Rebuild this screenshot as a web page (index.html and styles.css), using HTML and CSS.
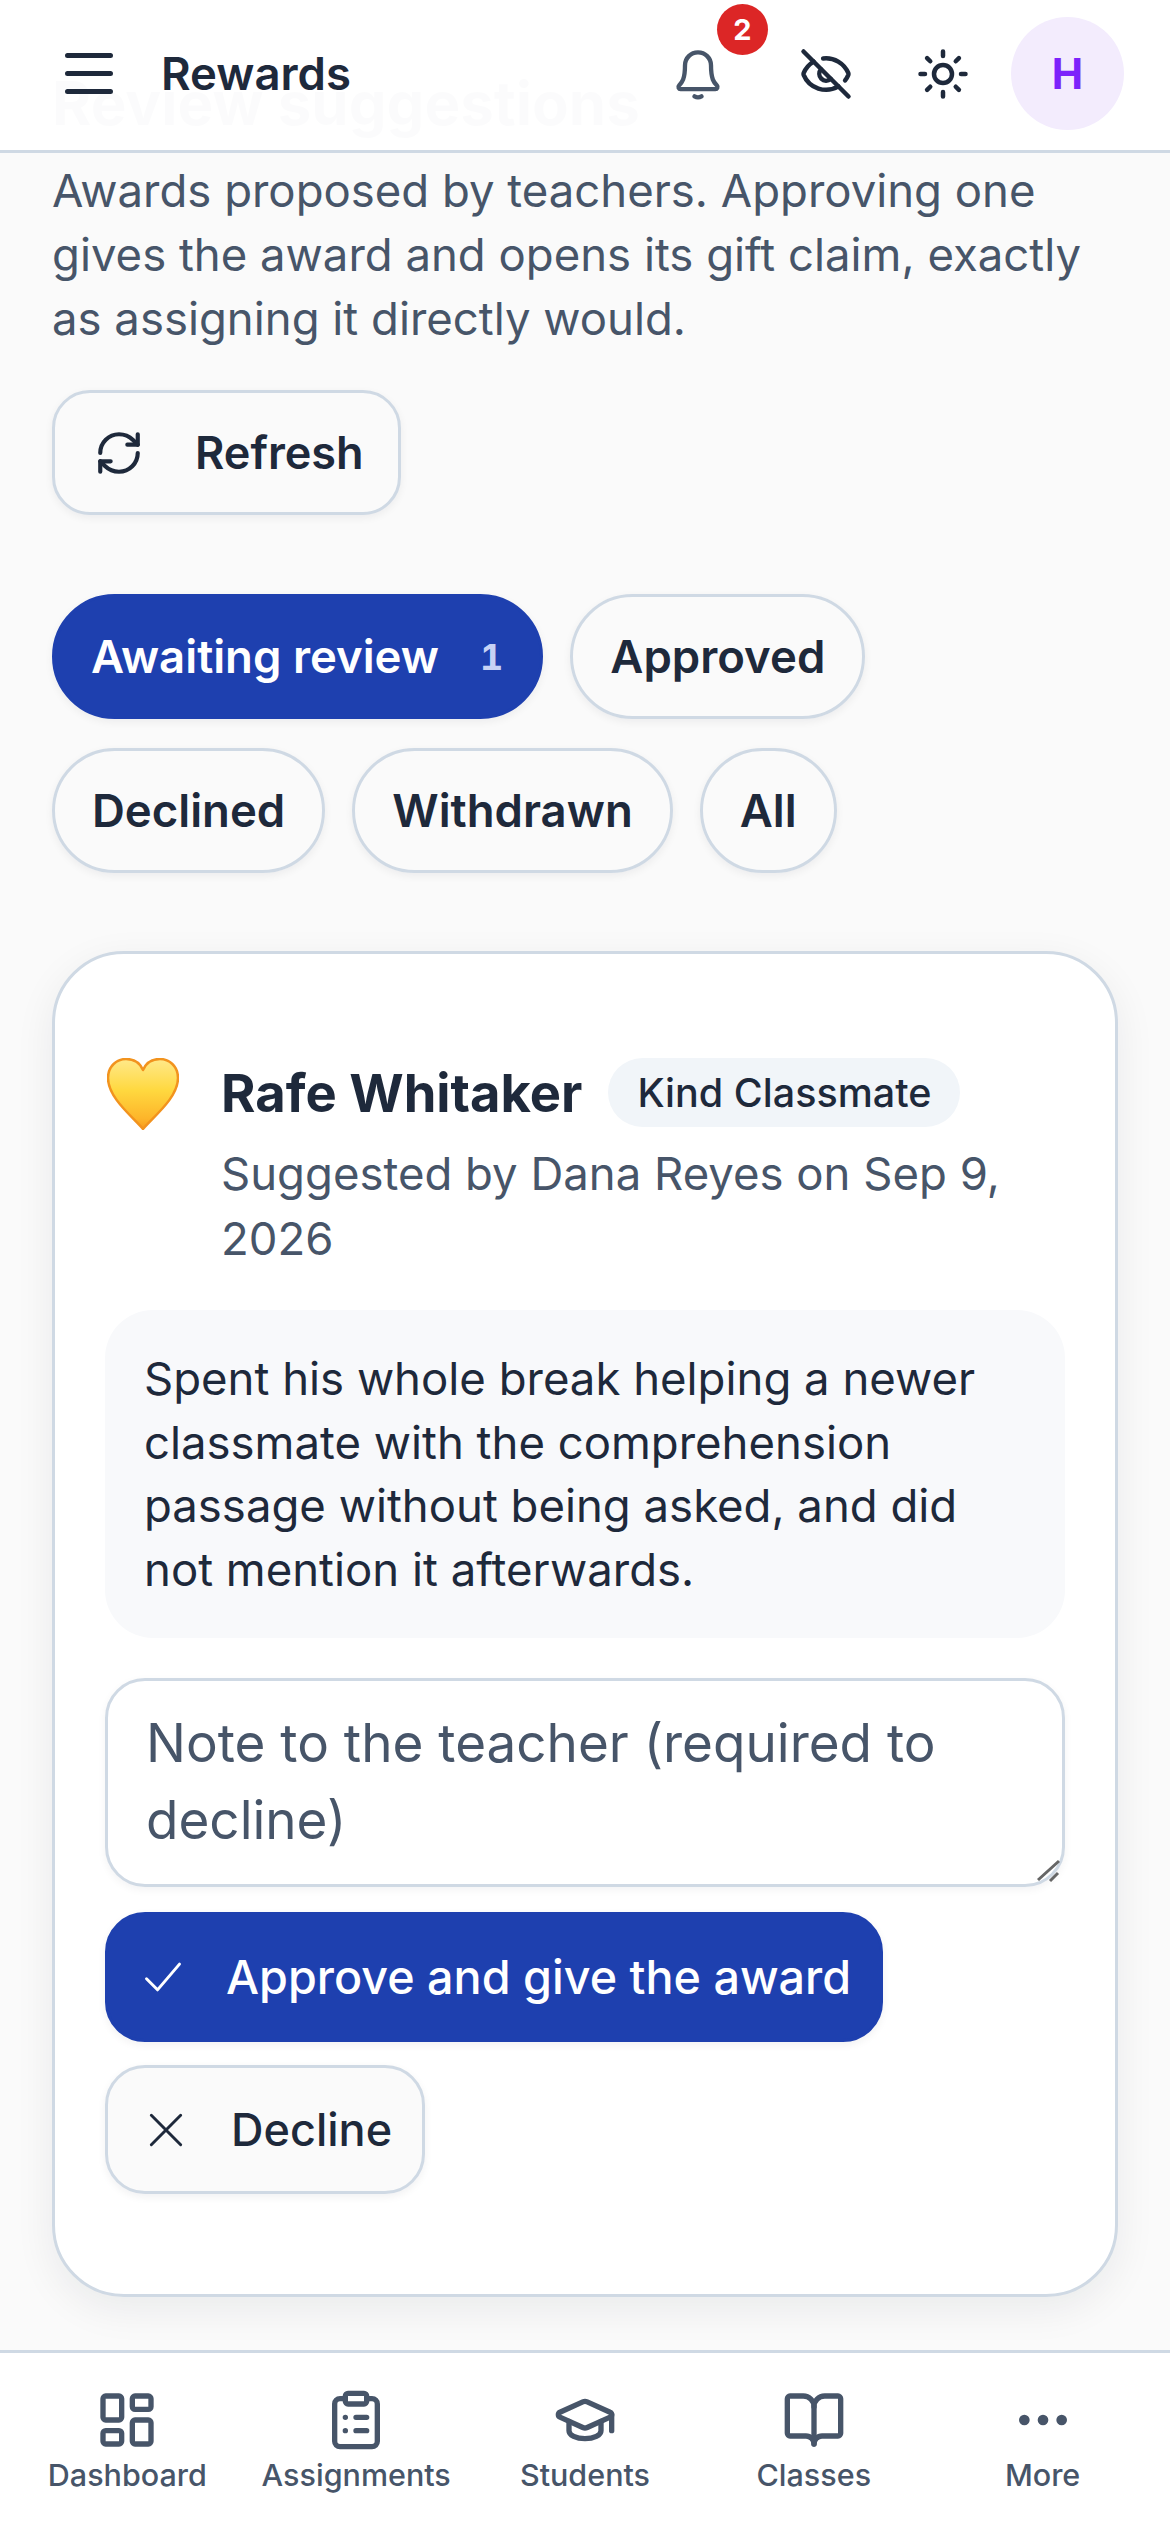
FILE: index.html
```html
<!DOCTYPE html>
<html lang="en">
<head>
  <meta charset="UTF-8">
  <meta name="viewport" content="width=device-width, initial-scale=1.0">
  <title>Rewards</title>
  <link rel="stylesheet" href="styles.css">
</head>
<body>

<div class="app">
  <!-- Top bar sits over the scrolled page -->
  <header class="topbar">
    <svg class="menu-icon" viewBox="0 0 48 41"><path d="M2.5 2.5h43M2.5 20.5h43M2.5 38.5h43"/></svg>
    <span class="topbar-title">Rewards</span>
    <div class="topbar-actions">
      <div class="icon-btn bell-btn">
        <svg class="icon bell-icon" viewBox="0 0 24 24"><path d="M10.4 22.3q1.6 1 3.2 0"/><path d="M3.26 17.3A1 1 0 0 0 4 19h16a1 1 0 0 0 .74-1.67C19.4 15.95 18 14.5 18 8A6 6 0 0 0 6 8c0 6.5-1.41 7.95-2.74 9.3"/></svg>
        <span class="notif-badge">2</span>
      </div>
      <div class="icon-btn">
        <svg class="icon" viewBox="0 0 24 24"><path d="M10.73 5.08a10.74 10.74 0 0 1 11.2 6.57 1 1 0 0 1 0 .7 10.75 10.75 0 0 1-1.44 2.49"/><path d="M14.08 14.16a3 3 0 0 1-4.24-4.24"/><path d="M17.48 17.5a10.75 10.75 0 0 1-15.42-5.15 1 1 0 0 1 0-.7 10.75 10.75 0 0 1 4.45-5.14"/><path d="m2 2 20 20"/></svg>
      </div>
      <div class="icon-btn">
        <svg class="icon" viewBox="0 0 24 24"><circle cx="12" cy="12" r="4"/><path d="M12 2v2M12 20v2M4.93 4.93l1.41 1.41M17.66 17.66l1.41 1.41M2 12h2M20 12h2M6.34 17.66l-1.41 1.41M19.07 4.93l-1.41 1.41"/></svg>
      </div>
      <div class="avatar">H</div>
    </div>
  </header>

  <main class="page">
    <h1 class="page-title">Review suggestions</h1>
    <p class="page-intro">Awards proposed by teachers. Approving one gives the award and opens its gift claim, exactly as assigning it directly would.</p>

    <button class="btn btn-refresh">
      <svg class="btn-icon refresh-icon" viewBox="0 0 24 24"><path d="M3 12a9 9 0 0 1 9-9 9.75 9.75 0 0 1 6.74 2.74L21 8"/><path d="M21 3v5h-5"/><path d="M21 12a9 9 0 0 1-9 9 9.75 9.75 0 0 1-6.74-2.74L3 16"/><path d="M8 16H3v5"/></svg>
      Refresh
    </button>

    <div class="tabs">
      <span class="tab tab-active">Awaiting review <span class="tab-count">1</span></span>
      <span class="tab">Approved</span>
      <span class="tab">Declined</span>
      <span class="tab">Withdrawn</span>
      <span class="tab">All</span>
    </div>

    <section class="card">
      <div class="card-head">
        <svg class="heart" viewBox="0 0 72 72">
          <defs>
            <linearGradient id="heartFill" x1="0" y1="0" x2="0" y2="1">
              <stop offset="0" stop-color="#ffe98a"/>
              <stop offset="0.45" stop-color="#ffd83f"/>
              <stop offset="0.85" stop-color="#fdb52a"/>
              <stop offset="1" stop-color="#f79a1c"/>
            </linearGradient>
          </defs>
          <path d="M36 71C26 59 1 40 1 20 1 8 10 1 19 1c8 0 14 4 17 11C39 5 45 1 53 1c9 0 18 7 18 19 0 20-25 39-35 51z" fill="url(#heartFill)" stroke="#f2931e" stroke-width="2.5"/>
        </svg>
        <div class="card-meta">
          <div class="card-name-row">
            <span class="card-name">Rafe Whitaker</span>
            <span class="award-badge">Kind Classmate</span>
          </div>
          <p class="card-sub">Suggested by Dana Reyes on Sep 9, 2026</p>
        </div>
      </div>

      <p class="card-note">Spent his whole break helping a newer classmate with the comprehension passage without being asked, and did not mention it afterwards.</p>

      <div class="note-field">
        <textarea class="note-input" rows="2" placeholder="Note to the teacher (required to decline)"></textarea>
        <svg class="resize-grip" viewBox="0 0 30 30"><path d="M3 22L24 3M15 23l8-8"/></svg>
      </div>

      <button class="btn btn-primary">
        <svg class="btn-icon small-icon" viewBox="0 0 24 24"><path d="M3 13l6 6L21 5"/></svg>
        Approve and give the award
      </button>
      <button class="btn btn-decline">
        <svg class="btn-icon small-icon" viewBox="0 0 24 24"><path d="M4 4l16 16M20 4L4 20"/></svg>
        Decline
      </button>
    </section>
  </main>

  <nav class="bottomnav">
    <div class="nav-item">
      <svg class="nav-icon" viewBox="0 0 24 24"><rect x="3" y="3" width="7" height="9" rx="1"/><rect x="14" y="3" width="7" height="5" rx="1"/><rect x="14" y="12" width="7" height="9" rx="1"/><rect x="3" y="16" width="7" height="5" rx="1"/></svg>
      <span>Dashboard</span>
    </div>
    <div class="nav-item">
      <svg class="nav-icon" viewBox="0 0 24 24"><rect x="8" y="2" width="8" height="4" rx="1"/><path d="M16 4h2a2 2 0 0 1 2 2v14a2 2 0 0 1-2 2H6a2 2 0 0 1-2-2V6a2 2 0 0 1 2-2h2"/><path d="M12 11h4M12 16h4M8 11h.01M8 16h.01"/></svg>
      <span>Assignments</span>
    </div>
    <div class="nav-item">
      <svg class="nav-icon" viewBox="0 0 24 24"><path d="M21.42 10.92a1 1 0 0 0-.02-1.84L12.83 5.18a2 2 0 0 0-1.66 0L2.6 9.08a1 1 0 0 0 0 1.83l8.57 3.91a2 2 0 0 0 1.66 0z"/><path d="M22 10v6"/><path d="M6 12.5V16a6 3 0 0 0 12 0v-3.5"/></svg>
      <span>Students</span>
    </div>
    <div class="nav-item">
      <svg class="nav-icon" viewBox="0 0 24 24"><path d="M12 7v14"/><path d="M3 18a1 1 0 0 1-1-1V4a1 1 0 0 1 1-1h5a4 4 0 0 1 4 4 4 4 0 0 1 4-4h5a1 1 0 0 1 1 1v13a1 1 0 0 1-1 1h-6a3 3 0 0 0-3 3 3 3 0 0 0-3-3z"/></svg>
      <span>Classes</span>
    </div>
    <div class="nav-item">
      <svg class="nav-icon" viewBox="0 0 24 24"><circle cx="12" cy="12" r="1"/><circle cx="19" cy="12" r="1"/><circle cx="5" cy="12" r="1"/></svg>
      <span>More</span>
    </div>
  </nav>
</div>

</body>
</html>
```

FILE: styles.css
```css
* {
  box-sizing: border-box;
}

body {
  margin: 0;
  background-color: #fafafa;
  color: #1e293b;
  font-family: "Inter", "Noto Sans", sans-serif;
}

.app {
  position: relative;
  display: flex;
  flex-direction: column;
  height: 2532px;
  overflow: hidden;
}

svg {
  fill: none;
  stroke: currentColor;
  stroke-linecap: round;
  stroke-linejoin: round;
  flex-shrink: 0;
}

/* Top bar */
.topbar {
  position: absolute;
  top: 0;
  left: 0;
  right: 0;
  z-index: 2;
  display: flex;
  align-items: center;
  height: 153px;
  padding: 0 46px 3px 65px;
  background-color: rgba(255, 255, 255, 0.985);
  border-bottom: 3px solid #cfd9e4;
}

.menu-icon {
  width: 48px;
  height: 41px;
  stroke-width: 5;
}

.topbar-title {
  margin-left: 48px;
  font-size: 45.5px;
  font-weight: 600;
}

.topbar-actions {
  display: flex;
  align-items: center;
  margin-left: auto;
}

.icon-btn {
  position: relative;
  display: flex;
  align-items: center;
  justify-content: center;
  width: 117px;
  height: 117px;
}

.bell-btn {
  margin-right: 11px;
  color: #475569;
}

.icon {
  width: 54px;
  height: 54px;
  stroke-width: 2;
}

.bell-icon {
  width: 52px;
  height: 52px;
}

.notif-badge {
  position: absolute;
  top: -11px;
  right: -12px;
  display: flex;
  align-items: center;
  justify-content: center;
  width: 51px;
  height: 51px;
  border-radius: 50%;
  background-color: #dc2626;
  color: #fff;
  font-size: 29px;
  font-weight: 700;
}

.avatar {
  display: flex;
  align-items: center;
  justify-content: center;
  width: 113px;
  height: 113px;
  margin-left: 10px;
  border-radius: 50%;
  background-color: #f3ecfd;
  color: #7c22fb;
  font-size: 42px;
  font-weight: 700;
}

/* Page */
.page {
  flex: 1;
  min-height: 0;
  padding: 0 52px;
  overflow: hidden;
}

.page-title {
  margin: 67px 0 0;
  font-size: 60px;
  line-height: 72px;
  font-weight: 700;
}

.page-intro {
  margin: 20px 0 0;
  color: #475569;
  font-size: 45.5px;
  line-height: 64px;
}

.btn {
  display: flex;
  align-items: center;
  border: 3px solid #cfd9e4;
  background-color: #fafafa;
  color: #1e293b;
  font-family: inherit;
  font-size: 45px;
  font-weight: 600;
  box-shadow: 0 3px 8px rgba(15, 23, 42, 0.06);
}

.btn-refresh {
  gap: 51px;
  width: 349px;
  height: 125px;
  margin-top: 39px;
  padding: 0 0 0 39px;
  border-radius: 38px;
}

.btn-icon {
  stroke-width: 2;
}

.refresh-icon {
  width: 50px;
  height: 50px;
}

.small-icon {
  width: 44px;
  height: 44px;
  stroke-width: 1.6;
}

/* Status tabs */
.tabs {
  display: flex;
  flex-wrap: wrap;
  gap: 29px 27px;
  margin-top: 79px;
}

.tab {
  display: flex;
  align-items: center;
  height: 125px;
  padding: 0 37px;
  border: 3px solid #cfd9e4;
  border-radius: 63px;
  color: #1e293b;
  font-size: 45.5px;
  font-weight: 600;
  box-shadow: 0 3px 8px rgba(15, 23, 42, 0.06);
}

.tab-active {
  gap: 41px;
  padding-left: 36px;
  border-color: #1e40af;
  background-color: #1e40af;
  color: #fff;
}

.tab-count {
  color: #c7d2f5;
  font-size: 36px;
  font-weight: 700;
  font-variant-numeric: tabular-nums;
}

/* Suggestion card */
.card {
  margin-top: 78px;
  height: 1346px;
  padding: 104px 50px 0;
  border: 3px solid #cfd9e4;
  border-radius: 72px;
  background-color: #fff;
  box-shadow: 0 12px 40px rgba(15, 23, 42, 0.07);
}

.card-head {
  display: flex;
  gap: 42px;
}

.heart {
  width: 72px;
  height: 72px;
  margin-left: 2px;
  stroke: none;
}

.card-name-row {
  display: flex;
  align-items: center;
  gap: 26px;
}

.card-name {
  font-size: 52.5px;
  font-weight: 700;
}

.award-badge {
  display: flex;
  align-items: center;
  height: 69px;
  padding: 0 29px;
  border-radius: 35px;
  background-color: #f1f5f9;
  font-size: 39.5px;
  font-weight: 500;
}

.card-sub {
  margin: 14px 0 0;
  color: #475569;
  font-size: 45.5px;
  line-height: 65px;
}

.card-note {
  margin: 39px 0 0;
  padding: 37px 39px;
  border-radius: 48px;
  background-color: #f8f9fb;
  font-size: 45.5px;
  line-height: 63.5px;
}

.note-field {
  position: relative;
  margin-top: 40px;
}

.note-input {
  display: block;
  width: 100%;
  height: 209px;
  padding: 24px 38px;
  border: 3px solid #cfd9e4;
  border-radius: 40px;
  background-color: #fff;
  font-family: inherit;
  font-size: 53px;
  line-height: 77px;
  resize: none;
  box-shadow: 0 3px 8px rgba(15, 23, 42, 0.05);
}

.note-input::placeholder {
  color: #475569;
  opacity: 1;
}

.resize-grip {
  position: absolute;
  right: 0;
  bottom: -1px;
  width: 30px;
  height: 30px;
  stroke: #666;
  stroke-width: 3;
  stroke-linecap: butt;
}

.btn-primary {
  gap: 41px;
  width: 778px;
  height: 130px;
  margin-top: 25px;
  padding: 0 0 0 33px;
  border-radius: 40px;
  border-color: #1e40af;
  background-color: #1e40af;
  color: #fff;
  font-size: 46.7px;
  font-weight: 500;
}

.btn-decline {
  gap: 43px;
  width: 320px;
  height: 129px;
  margin-top: 23px;
  padding: 0 0 0 36px;
  border-radius: 40px;
  font-weight: 500;
}

/* Bottom navigation */
.bottomnav {
  display: grid;
  grid-template-columns: repeat(5, 1fr);
  height: 182px;
  padding: 35px 13px 0;
  border-top: 3px solid #cfd9e4;
  background-color: #fff;
  color: #475569;
}

.nav-item {
  display: flex;
  flex-direction: column;
  align-items: center;
  gap: 4px;
  font-size: 30.5px;
  font-weight: 500;
}

.nav-icon {
  width: 64px;
  height: 64px;
  stroke-width: 2;
}
```
